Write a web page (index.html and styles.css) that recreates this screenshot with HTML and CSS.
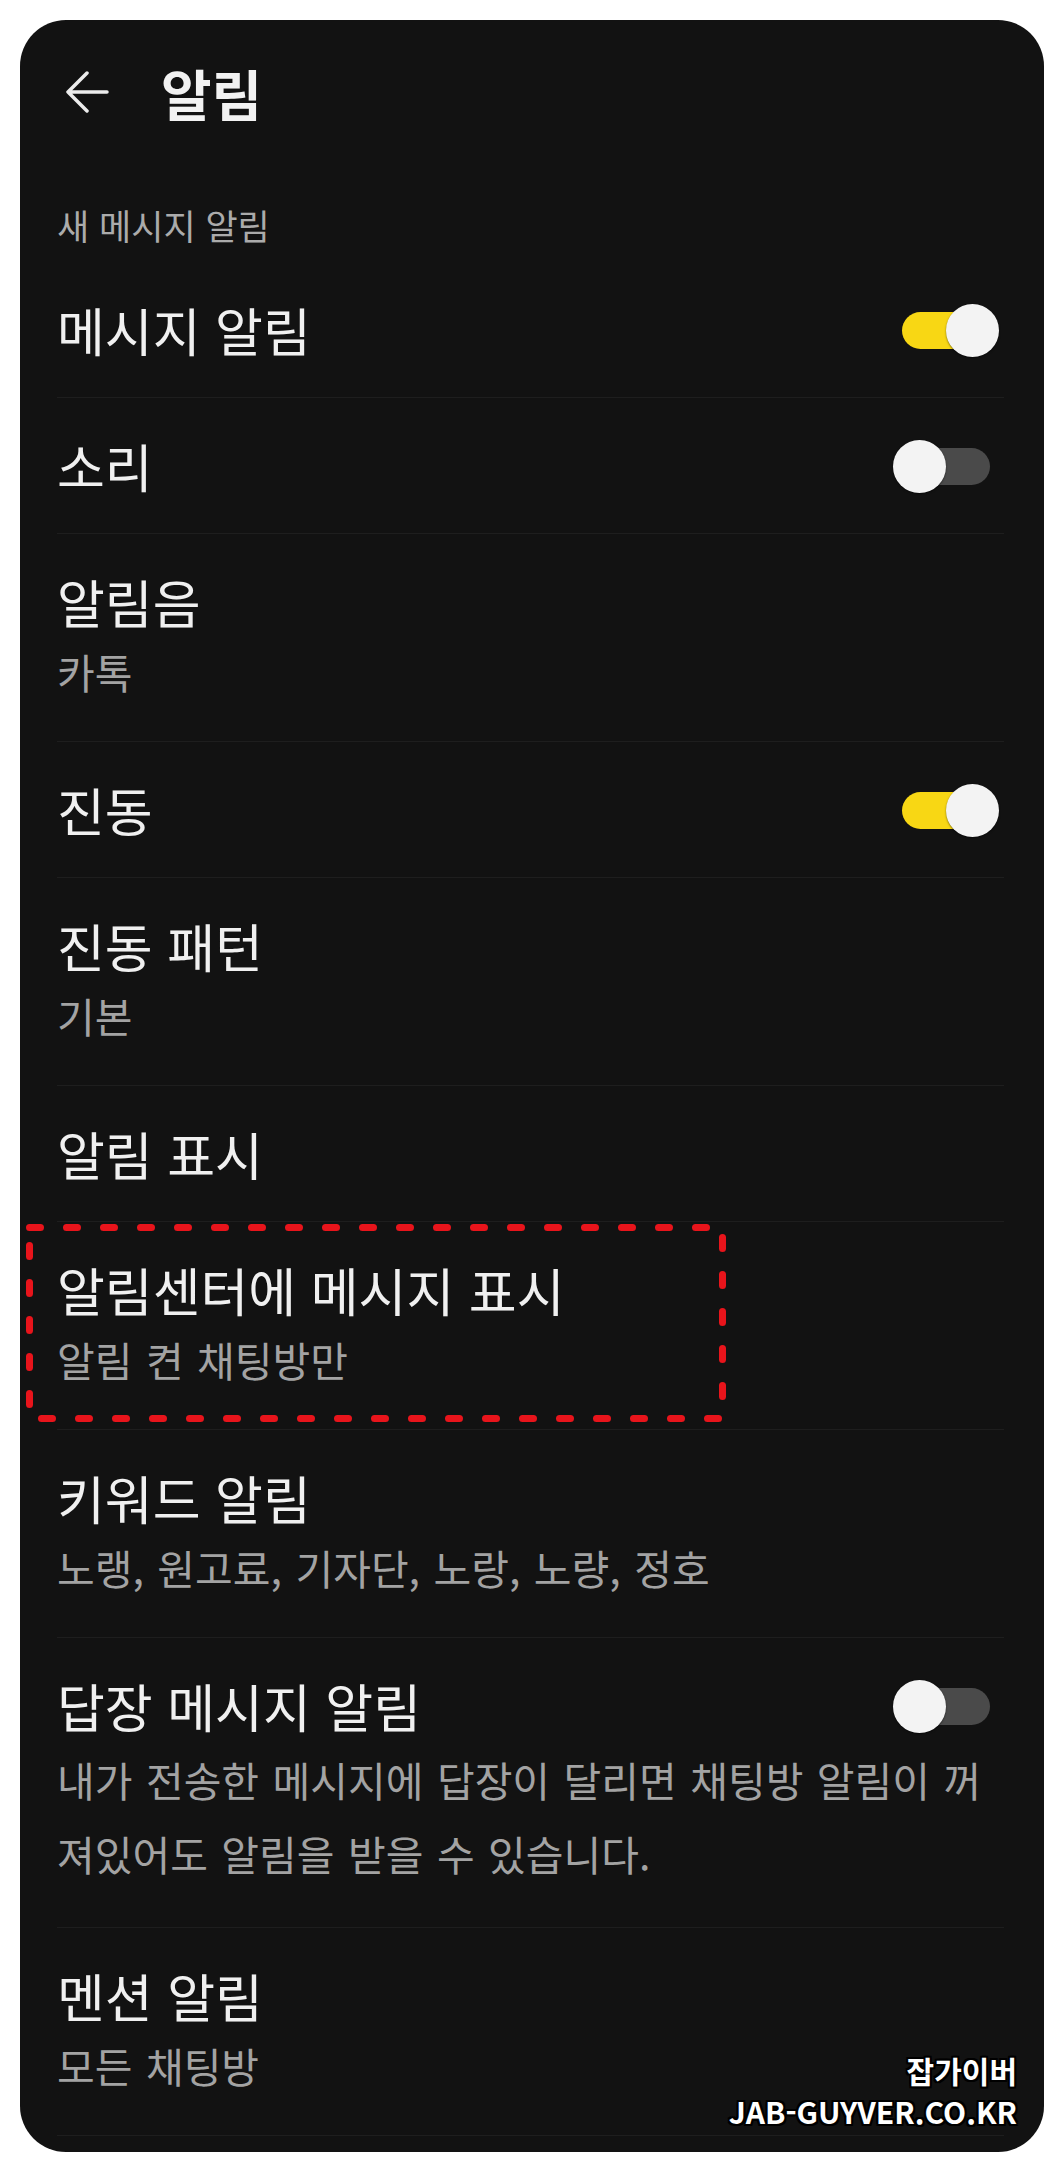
FILE: index.html
```html
<!DOCTYPE html>
<html lang="ko">
<head>
    <meta charset="UTF-8">
    <meta name="viewport" content="width=device-width, initial-scale=1.0">
    <title>알림</title>
    <link rel="stylesheet" href="styles.css">
</head>
<body>

    <div class="phone">
        <div class="topbar">
            <svg class="back" width="44" height="42" viewBox="0 0 44 42">
                <path d="M42 21 H3 M22 2 L3 21 L22 40" fill="none" stroke="#ececec" stroke-width="3.5" stroke-linecap="round" stroke-linejoin="round"/>
            </svg>
            <h1>알림</h1>
        </div>

        <p class="group-label">새 메시지 알림</p>

        <ul class="settings">
            <li class="row">
                <div class="row-head">
                    <span class="title">메시지 알림</span>
                    <span class="toggle on"><span class="track"></span><span class="knob"></span></span>
                </div>
            </li>
            <li class="row">
                <div class="row-head">
                    <span class="title">소리</span>
                    <span class="toggle"><span class="track"></span><span class="knob"></span></span>
                </div>
            </li>
            <li class="row">
                <div class="row-head"><span class="title">알림음</span></div>
                <p class="sub">카톡</p>
            </li>
            <li class="row">
                <div class="row-head">
                    <span class="title">진동</span>
                    <span class="toggle on"><span class="track"></span><span class="knob"></span></span>
                </div>
            </li>
            <li class="row">
                <div class="row-head"><span class="title">진동 패턴</span></div>
                <p class="sub">기본</p>
            </li>
            <li class="row">
                <div class="row-head"><span class="title">알림 표시</span></div>
            </li>
            <li class="row marked">
                <div class="row-head"><span class="title">알림센터에 메시지 표시</span></div>
                <p class="sub">알림 켠 채팅방만</p>
                <svg class="mark" width="700" height="198" viewBox="0 0 700 198">
                    <rect x="3.5" y="3.5" width="693" height="191" fill="none" stroke="#e8141b" stroke-width="7" stroke-dasharray="11 26" stroke-linecap="round"/>
                </svg>
            </li>
            <li class="row">
                <div class="row-head"><span class="title">키워드 알림</span></div>
                <p class="sub">노랭, 원고료, 기자단, 노랑, 노량, 정호</p>
            </li>
            <li class="row">
                <div class="row-head">
                    <span class="title">답장 메시지 알림</span>
                    <span class="toggle"><span class="track"></span><span class="knob"></span></span>
                </div>
                <p class="desc">내가 전송한 메시지에 답장이 달리면 채팅방 알림이 꺼<br>져있어도 알림을 받을 수 있습니다.</p>
            </li>
            <li class="row">
                <div class="row-head"><span class="title">멘션 알림</span></div>
                <p class="sub">모든 채팅방</p>
            </li>
        </ul>

        <div class="watermark">
            <span>잡가이버</span>
            <span>JAB-GUYVER.CO.KR</span>
        </div>
    </div>

</body>
</html>
```

FILE: styles.css
```css
* {
    padding: 0;
    margin: 0;
    box-sizing: border-box;
}

body {
    background-color: #ffffff;
    font-family: "Noto Sans CJK KR", "Noto Sans", sans-serif;
}

.phone {
    position: relative;
    width: 1024px;
    height: 2132px;
    margin: 20px;
    background-color: #121212;
    border-radius: 46px;
    overflow: hidden;
    color: #f0f0f0;
}

.topbar {
    height: 144px;
    display: flex;
    align-items: center;
    padding-left: 45px;
}

.topbar h1 {
    margin-left: 52px;
    font-size: 55px;
    font-weight: 700;
    line-height: 62px;
    color: #f2f2f2;
}

.group-label {
    padding: 42px 0 18px 37px;
    font-size: 35px;
    line-height: 38px;
    color: #ababab;
}

.settings {
    list-style: none;
}

.row {
    position: relative;
    margin: 0 40px 0 37px;
    padding: 40px 0 39px;
    border-bottom: 1px solid #1e1e1e;
}

.row-head {
    height: 56px;
    display: flex;
    align-items: center;
    justify-content: space-between;
}

.title {
    font-size: 52px;
    line-height: 56px;
    color: #f0f0f0;
}

.sub {
    margin-top: 17px;
    margin-bottom: 7px;
    font-size: 41px;
    line-height: 48px;
    word-spacing: 2px;
    color: #a3a3a3;
}

.desc {
    margin-top: 8px;
    margin-bottom: -2px;
    font-size: 41px;
    line-height: 74px;
    word-spacing: 2px;
    color: #a3a3a3;
}

.toggle {
    position: relative;
    width: 106px;
    height: 53px;
    margin-right: 5px;
    padding: 8px 9px;
}

.track {
    display: block;
    height: 37px;
    border-radius: 19px;
    background-color: #4a4a4a;
}

.knob {
    position: absolute;
    top: 0;
    left: 0;
    width: 53px;
    height: 53px;
    border-radius: 50%;
    background-color: #f3f3f3;
    box-shadow: 0 1px 2px rgba(0, 0, 0, 0.5);
}

.toggle.on .track {
    background-color: #f8d714;
}

.toggle.on .knob {
    left: auto;
    right: 0;
}

.mark {
    position: absolute;
    left: -31px;
    top: 2px;
}

.watermark {
    position: absolute;
    right: 27px;
    bottom: 20px;
    display: flex;
    flex-direction: column;
    align-items: flex-end;
    font-size: 30px;
    font-weight: 700;
    line-height: 41px;
    color: #ffffff;
    text-shadow: 2px 0 0 #000, -2px 0 0 #000, 0 2px 0 #000, 0 -2px 0 #000,
        2px 2px 0 #000, -2px -2px 0 #000, 2px -2px 0 #000, -2px 2px 0 #000;
}
```
